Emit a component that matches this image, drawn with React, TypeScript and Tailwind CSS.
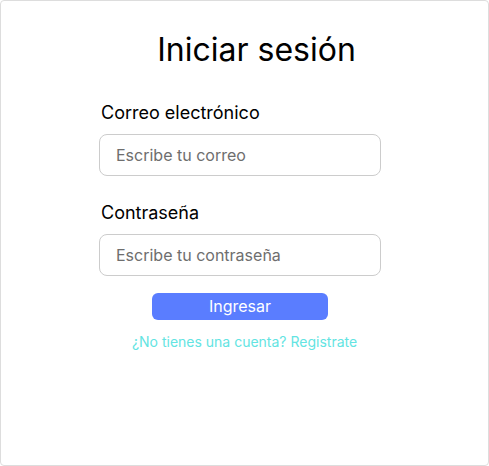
export default function App() {
  return (
    <div className="w-[489px] h-[466px] bg-white border border-[#dddddd] rounded-[4px] font-['Inter',sans-serif]">
      <h1 className="pt-[29px] pl-6 text-center text-[32px] leading-[40px] text-black font-normal">
        Iniciar sesión
      </h1>

      <form className="ml-[98px] mt-[29px] w-[282px] flex flex-col">
        <label className="pl-[2px] text-[18px] leading-[28px] text-black">Correo electrónico</label>
        <input
          type="email"
          placeholder="Escribe tu correo"
          className="mt-[7px] h-[42px] px-4 border border-[#cccccc] rounded-lg text-base text-black placeholder:text-[#6e6e6e] outline-none"
        />

        <label className="mt-[23px] pl-[2px] text-[18px] leading-[28px] text-black">Contraseña</label>
        <input
          type="password"
          placeholder="Escribe tu contraseña"
          className="mt-[7px] h-[42px] px-4 border border-[#cccccc] rounded-lg text-base text-black placeholder:text-[#6e6e6e] outline-none"
        />

        <button
          type="button"
          className="mt-[17px] self-center w-[176px] h-[27px] bg-[#5a7dff] text-white text-base leading-[27px] rounded-md"
        >
          Ingresar
        </button>
      </form>

      <p className="mt-[12px] text-center text-sm leading-5 text-[#63e4e2]">
        ¿No tienes una cuenta? Registrate
      </p>
    </div>
  );
}
